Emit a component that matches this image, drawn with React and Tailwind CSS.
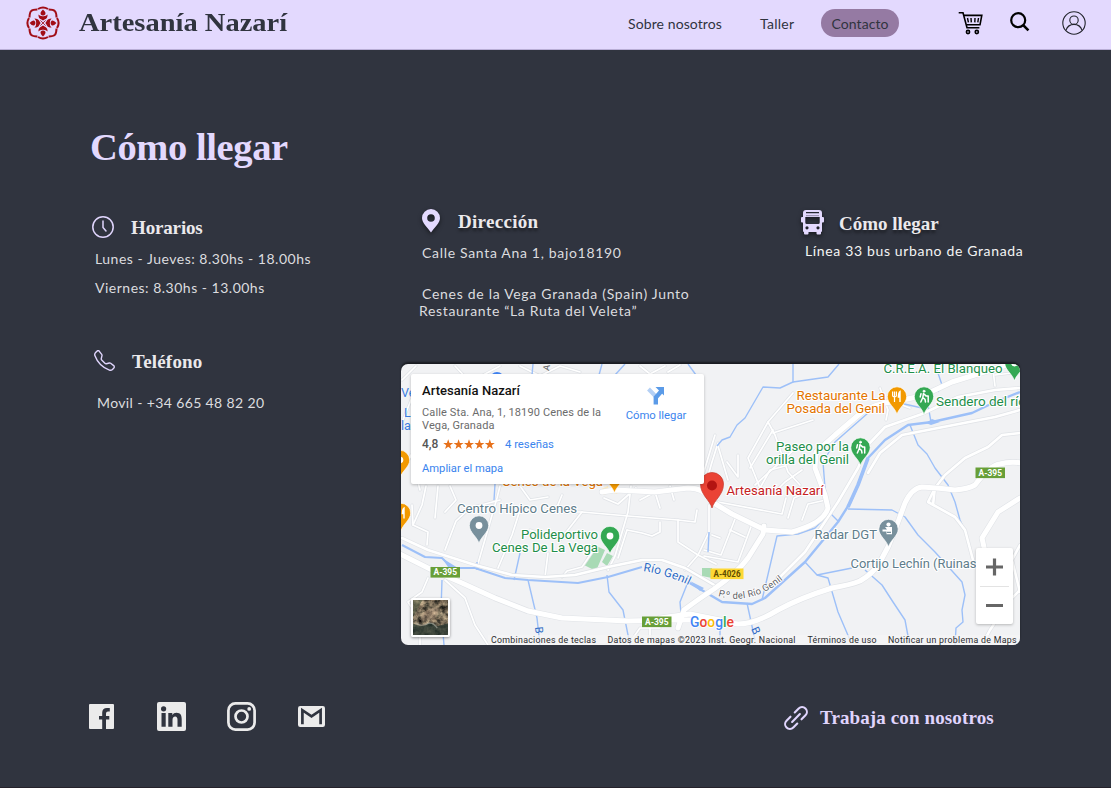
import React from "react";
import { BsTelephone } from "react-icons/bs";

const RIVER = "#9dc0f8";

const minorRoads = [
  "M412 505L413 525L428 532L427 545",
  "M413 525L422 505L426 486",
  "M438 486L435 518",
  "M477 567L497 498L500 486",
  "M445 550L456 521L470 508L500 500",
  "M498 568L512 535L520 510",
  "M545 577L548 553",
  "M562 577L567 571L582 567L595 548",
  "M562 495L555 512L582 512L628 516L678 520L695 522L697 510",
  "M582 512L560 540L530 530",
  "M631 486L628 512L615 556L608 570",
  "M678 520L678 542L698 555L716 564",
  "M698 555L685 570",
  "M627 530L642 533L652 536L660 532L660 522",
  "M627 530L618 558",
  "M709 505L709 532L698 555",
  "M712 535L720 538",
  "M735 519L721 555L704 550",
  "M752 524L738 562L704 556",
  "M730 530L745 537",
  "M428 578L422 592L408 602L416 614",
  "M420 636L420 645",
  "M445 580L465 598L475 625L488 645",
  "M628 645L640 628L660 628",
  "M650 628L650 645",
  "M793 393L768 422L748 458L760 488",
  "M773 433L813 420",
  "M768 422L775 435L788 472L800 485",
  "M773 430L750 468",
  "M738 455L738 477L727 462",
  "M718 443L712 462L708 476",
  "M718 446L728 480",
  "M755 485L788 455L796 448",
  "M775 492L785 482L802 470",
  "M760 488L770 470L785 466",
  "M715 435L702 478",
  "M718 502L782 514L786 498",
  "M788 518L794 498L808 492",
  "M802 520L808 504L826 500",
  "M880 388L888 410L886 420",
  "M888 400L910 408",
  "M995 386L993 370",
  "M995 375L1020 372",
  "M455 366L470 382L500 366",
  "M520 366L540 376L560 366L580 372",
  "M640 366L650 374L665 366",
  "M668 372L680 365",
  "M402 380L416 366",
  "M403 420L411 400",
  "M403 470L411 455L420 490",
  "M450 486L456 500L445 512",
  "M520 486L530 500L548 497",
  "M604 498L618 504L636 488",
  "M640 500L655 492L660 508",
  "M670 486L674 500",
];

const mediumRoads = [
  "M402 538L428 550L475 565L512 575L545 577L575 575L608 567L642 560L662 560L685 568L716 586",
  "M1020 388L995 390L958 397L922 414L885 427L868 445L858 468L838 502L805 552L772 585",
  "M1020 410L995 417L938 428L902 435L880 453L868 473",
  "M1020 433L1002 435L988 447L965 458L945 475L935 488L928 502L955 517L965 530L973 560",
  "M935 487L933 505",
  "M1020 590L1010 600L990 630L982 645",
  "M1020 545L1012 560L1020 592",
];

const majorRoads = [
  "M398 553L432 570L462 583L495 598L528 611L562 618L628 621L675 620L706 620L738 624Q755 624 778 610Q800 598 832 588Q850 585 860 581Q874 573 880 562L888 547L898 522L905 503Q912 488 922 487Q940 488 955 490Q968 489 975 485Q990 465 1000 464Q1010 461 1022 463",
  "M678 628L684 610Q700 598 714 589Q738 572 748 558L763 534L764 526",
  "M712 502L732 514L765 530L792 532Q806 528 815 523Q826 516 828 508L825 495L815 468L816 452L835 435L862 412Q878 403 892 402L922 396L952 382L1010 364",
  "M602 492L615 490L655 492L688 488Q704 488 711 500",
  "M660 618L690 614L720 620",
  "M1020 498L998 512L982 538L985 552",
];

const streams = [
  "M793 364V382L780 388L763 387L745 418L737 425L730 437L722 440L717 446",
  "M839 364L828 377L793 382",
  "M868 413L835 442L823 462L825 488L830 508L826 518",
  "M935 364L942 385L938 392",
  "M928 405L931 422",
  "M900 403L922 408",
  "M910 425L918 445L927 454L935 468L948 485L955 502L960 520L967 535",
  "M848 509L892 510L905 517L918 535L935 552L962 582L965 595L962 610L963 622L956 628L955 645",
  "M805 562L817 575L852 568",
  "M817 575L828 578L838 612L850 640",
  "M865 570L882 585L893 602L905 620L908 636",
  "M762 600L777 536L798 534L815 528L830 513L838 521",
  "M747 603L755 640",
  "M720 628V645",
  "M442 580L441 610L444 645",
  "M528 580L537 618L540 645",
  "M607 575L609 592L623 610L630 645",
  "M520 553L514 580",
  "M477 562V570",
  "M688 582L680 602L681 614",
  "M495 484L494 500",
  "M688 364L696 375",
  "M602 364L599 375",
  "M625 364L615 375",
  "M533 364L532 375",
  "M709 532L708 552",
];

function Roads({ paths, width, casing }) {
  return (
    <g fill="none" strokeLinejoin="round" strokeLinecap="round">
      <g stroke="#e0e3e7" strokeWidth={width + casing}>
        {paths.map((d) => <path key={d} d={d} />)}
      </g>
      <g stroke="#ffffff" strokeWidth={width}>
        {paths.map((d) => <path key={d} d={d} />)}
      </g>
    </g>
  );
}

function Marker({ x, y, color, children }) {
  return (
    <g transform={`translate(${x} ${y})`}>
      <path d="M0 0C-1.5-6.5-9.7-11-9.7-18A9.7 9.7 0 0 1 9.7-18C9.7-11 1.5-6.5 0 0Z" fill={color} stroke="#fff" strokeWidth=".7" />
      {children || <circle cy="-18" r="3.4" fill="#fff" />}
    </g>
  );
}

function Hiker() {
  return (
    <g fill="none" stroke="#fff" strokeWidth="1.5" strokeLinecap="round">
      <circle cx="0" cy="-23.3" r="1" fill="#fff" strokeWidth=".8" />
      <path d="M-.5-21L-1.2-17L1-15.2L1.5-12.5M-1.2-17L-3.2-12.5M0-20.5L2-18.6H3.6M-3-20.7L-3.8-17.6M4.2-18.5V-12.5" />
    </g>
  );
}

function Cutlery() {
  return (
    <g fill="none" stroke="#fff" strokeWidth="1.4">
      <path d="M-2.5-17.5V-12.5M-4.4-23V-19Q-4.4-17.6-2.5-17.6Q-.6-17.6-.6-19V-23M-2.5-23V-18" strokeWidth="1.2" />
      <path d="M3-12.5V-23Q1.4-22 1.4-17.5H3" fill="#fff" />
    </g>
  );
}

function Label({ x, y, w, color, size = 12.8, children }) {
  return (
    <text x={x} y={y} fill={color} fontSize={size} textLength={w} lengthAdjust="spacingAndGlyphs" stroke="#fff" strokeWidth="2.2" strokeLinejoin="round" style={{ paintOrder: "stroke" }}>
      {children}
    </text>
  );
}

function Shield({ x, y, w, fill, color, children }) {
  return (
    <g>
      <rect x={x} y={y} width={w} height="10.6" fill={fill} />
      <text x={x + w / 2} y={y + 8.3} fontSize="8.5" fontWeight="700" fill={color} textAnchor="middle" textLength={w - 6} lengthAdjust="spacingAndGlyphs">{children}</text>
    </g>
  );
}

function MapDrawing() {
  const green = "#1e8e4a";
  const slate = "#607d8b";
  return (
    <svg className="block h-full w-full font-['Roboto',sans-serif]" viewBox="401 364 619 281">
      <rect x="401" y="364" width="619" height="281" fill="#f1f2f4" />
      <path d="M592 544L605 550L596 571L584 565Z M607 553L613 556L607 566L602 562Z" fill="#a8dab5" />
      <path d="M702 568H712V578L702 576Z" fill="#a8dab5" />
      <path d="M601 489L608 486L609 493L603 495Z M616 488L620 489L617 494L614 493Z" fill="#fdecc0" />
      <Roads paths={minorRoads} width={1.7} casing={1.4} />
      <g fill="none" stroke={RIVER} strokeWidth="1.4" strokeLinejoin="round">
        {streams.map((d) => <path key={d} d={d} />)}
      </g>
      <g fill="none" stroke={RIVER} strokeLinejoin="round">
        <path d="M1020 392L995 402L972 413L932 422L908 425L885 440L868 458L858 485L850 503L838 522L805 562L765 598L752 604L722 602L705 592L688 582" strokeWidth="2.4" />
        <path d="M868 458L858 485L848 507" strokeWidth="3.6" />
        <path d="M642 567L608 577L578 583L528 580L505 578L475 568L452 568L442 558L425 557L402 545" strokeWidth="2" />
      </g>
      <path d="M926 423L932 419L940 422L931 425Z M442 558L458 568L450 570Z M690 581L704 588L700 591Z" fill={RIVER} />
      <Roads paths={mediumRoads} width={2.6} casing={1.3} />
      <Roads paths={majorRoads} width={5} casing={1.2} />

      <circle cx="497" cy="379" r="7" fill="#4285f4" />
      <g fontSize="12.5" fill="#3b7de0">
        <text x="401" y="397">Ve</text>
        <text x="404" y="417">L</text>
        <text x="401" y="430">la</text>
      </g>
      <text x="549" y="371" fontSize="9" fill="#555" transform="rotate(-80 549 371)">A</text>
      <Marker x={400} y={478} color="#f29900" />
      <Marker x={401} y={531} color="#f29900"><Cutlery /></Marker>
      <Marker x={614.5} y={493} color="#f29900" />
      <Label x={502} y={486} w={101} color="#e37400">Cenes de la Vega</Label>

      <Label x={457} y={512.5} w={120} color={slate}>Centro Hípico Cenes</Label>
      <Marker x={479} y={543.5} color="#78909c" />
      <Label x={521} y={539} w={77} color={green}>Polideportivo</Label>
      <Label x={492} y={552} w={106} color={green}>Cenes De La Vega</Label>
      <Marker x={610} y={554} color="#34a853" />

      <Label x={796.5} y={399.5} w={89} color="#e37400">Restaurante La</Label>
      <Label x={786.5} y={412.5} w={98.5} color="#e37400">Posada del Genil</Label>
      <Marker x={897} y={414.5} color="#f29900"><Cutlery /></Marker>
      <Marker x={924} y={414.5} color="#34a853"><Hiker /></Marker>
      <Label x={936} y={406} w={90} color={green}>Sendero del río</Label>
      <Label x={883.5} y={372.5} w={119} color={green}>C.R.E.A. El Blanqueo</Label>
      <Marker x={1014.5} y={381} color="#34a853" />
      <Label x={776} y={450.5} w={73} color={green}>Paseo por la</Label>
      <Label x={766} y={463.5} w={83} color={green}>orilla del Genil</Label>
      <Marker x={860.5} y={465.5} color="#34a853"><Hiker /></Marker>
      <Label x={814.5} y={538.5} w={62.5} color={slate}>Radar DGT</Label>
      <Marker x={888.5} y={547} color="#78909c">
        <g fill="#fff">
          <circle cx="0" cy="-22.4" r="2.1" />
          <path d="M-3.5-20H3.5V-12.8H-2V-15.5H-6V-17.4H-1.5Z" />
          <path d="M-1.5-15.3H2.5V-14H-1.5Z" fill="#78909c" />
        </g>
      </Marker>
      <Label x={850.5} y={568} w={126} color={slate}>Cortijo Lechín (Ruinas</Label>

      <path d="M712 508C710 500 700.5 495 700.5 484A11.5 11.5 0 0 1 723.5 484C723.5 495 714 500 712 508Z" fill="#ea4335" stroke="#c5392d" strokeWidth=".7" />
      <circle cx="712" cy="485.5" r="5" fill="#b31412" />
      <Label x={726.5} y={494.5} w={97} color="#c5221f">Artesanía Nazarí</Label>

      <Shield x={430.5} y={567} w={29.5} fill="#689f38" color="#fff">A-395</Shield>
      <Shield x={642} y={616.5} w={29.5} fill="#689f38" color="#fff">A-395</Shield>
      <Shield x={975.5} y={467.5} w={29.5} fill="#689f38" color="#fff">A-395</Shield>
      <Shield x={710.5} y={568.5} w={33} fill="#fdd835" color="#5f4c00">A-4026</Shield>

      <defs>
        <path id="rio" d="M643 571Q668 575 690 586" />
        <path id="paseo" d="M718 596Q752 606 784 579" />
      </defs>
      <text fontSize="12" fill="#2f6bc4" stroke="#fff" strokeWidth="1.2" style={{ paintOrder: "stroke" }}>
        <textPath href="#rio" textLength="48">Río Genil</textPath>
      </text>
      <text fontSize="9.5" fill="#5f6368" stroke="#fff" strokeWidth="1.5" style={{ paintOrder: "stroke" }}>
        <textPath href="#paseo" textLength="70">P.º del Río Genil</textPath>
      </text>
      <text x="535" y="627" fontSize="11" fill="#2f6bc4" transform="rotate(85 535 627)">B</text>
      <text x="751" y="629" fontSize="11" fill="#2f6bc4" transform="rotate(65 751 629)">B</text>

      <text x="690" y="626.5" fontSize="14.5" fontWeight="500" textLength="44" lengthAdjust="spacingAndGlyphs" stroke="#fff" strokeWidth="1.6" style={{ paintOrder: "stroke" }}>
        <tspan fill="#4285f4">G</tspan><tspan fill="#ea4335">o</tspan><tspan fill="#fbbc04">o</tspan><tspan fill="#4285f4">g</tspan><tspan fill="#34a853">l</tspan><tspan fill="#ea4335">e</tspan>
      </text>

      <rect x="488" y="635" width="532" height="10" fill="#f5f5f5" opacity=".7" />
      <g fontSize="8.8" fill="#2b2c2f">
        <text x="491" y="643" textLength="105">Combinaciones de teclas</text>
        <text x="607.5" y="643" textLength="188">Datos de mapas ©2023 Inst. Geogr. Nacional</text>
        <text x="807.5" y="643" textLength="69">Términos de uso</text>
        <text x="888" y="643" textLength="128.5">Notificar un problema de Maps</text>
      </g>
    </svg>
  );
}

function Satellite() {
  return (
    <svg className="block h-full w-full" viewBox="0 0 36 36">
      <filter id="grain" x="0" y="0" width="100%" height="100%" colorInterpolationFilters="sRGB">
        <feTurbulence type="fractalNoise" baseFrequency=".17" numOctaves="4" seed="8" />
        <feColorMatrix values="1.2 0 0 0 -.12  1.05 .05 0 0 -.12  .85 .05 0 0 -.1  0 0 0 0 1" />
      </filter>
      <rect width="36" height="36" filter="url(#grain)" />
      <path d="M0 24Q8 29 14 25Q18 21 25 27L36 24V36H0Z" fill="#26362f" opacity=".75" />
      <path d="M3 24Q10 28 16 24Q21 23 25 29" fill="none" stroke="#b8b9ae" strokeWidth="1.2" opacity=".6" />
      <path d="M0 0H10L3 12L0 17Z" fill="#3f4d38" opacity=".5" />
      <path d="M8 16Q18 6 27 9L22 20Q14 19 8 22Z" fill="#b69a83" opacity=".35" />
    </svg>
  );
}

function LogoMark() {
  const turns = [0, 90, 180, 270];
  return (
    <svg className="h-[34px] w-[34px]" viewBox="-17 -17 34 34" fill="none">
      {turns.map((a) => (
        <g key={a} transform={`rotate(${a})`}>
          <path d="M-5-14Q0-17.2 5-14" stroke="#a10d16" strokeWidth="2" />
          <path d="M5.6-13.5Q10.4-13.4 11.9-11.9Q13.4-10.4 13.5-5.6" stroke="#a10d16" strokeWidth="2" />
          <path d="M0-13.4Q3.4-10.4 2.2-8.6Q1.3-7.6 0-7.6Q-1.3-7.6-2.2-8.6Q-3.4-10.4 0-13.4Z" fill="#a10d16" />
          <path d="M-4.6-8.6Q-3-6.6 0-6.8Q3-6.6 4.6-8.6Q4.6-4.6 2-3.7L0-2.4L-2-3.7Q-4.6-4.6-4.6-8.6Z" fill="#a10d16" />
          <path d="M0 0L2.6-2.6" stroke="#a10d16" strokeWidth=".8" />
        </g>
      ))}
    </svg>
  );
}

function Bus() {
  return (
    <svg className="mt-px h-[25px] w-[23px] overflow-visible drop-shadow-[0_2px_2px_rgba(0,0,0,0.5)]" viewBox="0 0 23 25">
      <path fillRule="evenodd" fill="#e3d9fe" d="M5 0H18Q21 0 21 3V7H22Q23 7 23 8V11.5Q23 12.5 22 12.5H21V21Q21 21.8 20 22V23.5Q20 24.5 19 24.5H16.5Q15.5 24.5 15.5 23.5V22H7.5V23.5Q7.5 24.5 6.5 24.5H4Q3 24.5 3 23.5V22Q2 21.8 2 21V12.5H1Q0 12.5 0 11.5V8Q0 7 1 7H2V3Q2 0 5 0ZM5 2V3.2H18V2ZM4.3 7V12.5Q4.3 14 5.8 14H17.2Q18.7 14 18.7 12.5V7ZM6 16.2A1.6 1.6 0 1 0 6 19.4A1.6 1.6 0 1 0 6 16.2ZM17 16.2A1.6 1.6 0 1 0 17 19.4A1.6 1.6 0 1 0 17 16.2Z" />
      <path d="M5 5.7H18" stroke="#8f88a6" strokeWidth="1" />
    </svg>
  );
}

function Cart() {
  return (
    <svg className="h-[24px] w-[26px]" viewBox="0 0 26 24" fill="none" stroke="#000" strokeWidth="1.6">
      <path d="M.7 1.8H5L9 16.8H21.4" />
      <path d="M6 4.4H23.8L22 13.8H8.4" />
      <path d="M9.5 7L10.4 11.4M13 7L13.3 11.4M17 7L16.8 11.4M20.5 7L19.8 11.4" strokeWidth="1.4" />
      <circle cx="10" cy="21" r="1.6" />
      <circle cx="18.8" cy="21" r="1.6" />
    </svg>
  );
}

function Header() {
  return (
    <header className="flex h-[50px] items-start border-b border-[#b9aed6] bg-[#e3d9fe] pl-[26px] text-[#30343f]">
      <div className="mt-[6px] h-[34px] w-[34px]"><LogoMark /></div>
      <div className="mt-[7px] ml-[19px] w-[548px] font-['Liberation_Serif',serif] text-[25px] leading-[32px] font-bold whitespace-nowrap">
        <span className="inline-block origin-left scale-x-[1.14]">Artesanía Nazarí</span>
      </div>
      <nav className="mt-[9px] flex font-['Lato',sans-serif] text-[14px] leading-[30px] whitespace-nowrap">
        <a className="block w-[132px] pl-px tracking-[0.1px]">Sobre nosotros</a>
        <a className="block w-[62px] pl-px tracking-[0.25px]">Taller</a>
        <a className="block h-[28px] w-[78px] rounded-full bg-[#957aa3] text-center tracking-[0.05px]">Contacto</a>
      </nav>
      <div className="mt-[11px] ml-[59px]"><Cart /></div>
      <svg className="mt-[12px] ml-[26px] h-[20px] w-[20px]" viewBox="0 0 20 20" fill="none" stroke="#000">
        <circle cx="8.2" cy="8.2" r="7" strokeWidth="2.2" />
        <path d="M13.2 13.2L18.4 18.4" strokeWidth="2.6" />
      </svg>
      <svg className="mt-[11px] ml-[32px] h-[24px] w-[24px]" viewBox="0 0 24 24" fill="none" stroke="#22242c" strokeWidth="1.1">
        <circle cx="12" cy="12" r="11.2" />
        <circle cx="12" cy="9.2" r="4.2" />
        <path d="M3.9 19.4Q6 13.4 12 13.4Q18 13.4 20.1 19.4" />
      </svg>
    </header>
  );
}

function InfoCard() {
  return (
    <div className="absolute top-[10px] left-[10px] flex h-[110px] w-[293px] justify-between rounded-[2px] bg-white pt-[8px] pr-[10px] pl-[11px] font-['Roboto',sans-serif] whitespace-nowrap shadow-[0_1px_3px_rgba(0,0,0,0.25)]">
      <div className="w-[190px]">
        <div className="text-[13px] leading-[18px] font-medium tracking-[0.05px] text-[#111]">Artesanía Nazarí</div>
        <div className="mt-[6px] text-[11px] leading-[13px] tracking-[0.13px] text-[#6b6b6b]">Calle Sta. Ana, 1, 18190 Cenes de la<br />Vega, Granada</div>
        <div className="mt-[4px] flex h-[16px] items-center">
          <span className="w-[21px] text-[12px] font-medium text-[#555]">4,8</span>
          <svg className="h-[11px] w-[52px]" viewBox="0 0 52 11" fill="#e7711b">
            {[0, 1, 2, 3, 4].map((n) => (
              <path key={n} transform={`translate(${n * 10.4} 0)`} d="M5.2.3L6.5 4H10.2L7.2 6.3L8.3 10L5.2 7.8L2.1 10L3.2 6.3L.2 4H3.9Z" />
            ))}
          </svg>
          <span className="mt-[2px] ml-[10px] text-[11.3px] text-[#3a84ee]">4 reseñas</span>
        </div>
        <div className="mt-[9px] text-[11.2px] leading-[16px] text-[#3a84ee]">Ampliar el mapa</div>
      </div>
      <div className="flex w-[76px] flex-col items-center pt-[4px]">
        <svg className="h-[19px] w-[18px]" viewBox="0 0 18 19" fill="none">
          <path d="M1.5 3L8.8 10.5" stroke="#b4d0f5" strokeWidth="4" />
          <path d="M8.8 18.5V11.5L14.5 5" stroke="#5b9be8" strokeWidth="4.4" />
          <path d="M8.5 1H17V9.5Z" fill="#5b9be8" />
        </svg>
        <div className="mt-[3px] text-[11.3px] leading-[16px] text-[#3a84ee]">Cómo llegar</div>
      </div>
    </div>
  );
}

function MapPanel() {
  return (
    <div className="relative h-[281px] w-[619px] overflow-hidden rounded-[7px] shadow-[0_-2px_2px_rgba(0,0,0,0.5)]">
      <MapDrawing />
      <InfoCard />
      <div className="absolute top-[234px] left-[10px] h-[39px] w-[39px] rounded-[2px] border-2 border-white shadow-[0_1px_3px_rgba(0,0,0,0.4)]"><Satellite /></div>
      <div className="absolute top-[184px] left-[575px] h-[76px] w-[37px] rounded-[2px] bg-white shadow-[0_1px_3px_rgba(0,0,0,0.25)]">
        <svg className="block" width="37" height="76" viewBox="0 0 37 76">
          <path d="M18.5 10.5V27.5M10 19H27M10 57.5H27" stroke="#666" strokeWidth="3.2" />
          <path d="M4 38.5H33" stroke="#e3e3e3" />
        </svg>
      </div>
    </div>
  );
}

function LeftColumn() {
  return (
    <aside className="w-[309px] shrink-0 pt-[16px] whitespace-nowrap">
      <div className="flex h-[22px]">
        <svg className="h-[22px] w-[22px]" viewBox="0 0 22 22" fill="none" stroke="#e0d5fd" strokeWidth="1.5" strokeLinecap="round">
          <circle cx="11" cy="11" r="10.2" />
          <path d="M11 5V11.5L14 15" />
        </svg>
        <h2 className="ml-[17px] font-['Liberation_Serif',serif] text-[19px] leading-[24px] font-bold tracking-[-0.15px] text-[#ebe9ec]">Horarios</h2>
      </div>
      <p className="mt-[9px] ml-[3px] text-[14px] leading-[24px] tracking-[0.51px]">Lunes - Jueves: 8.30hs - 18.00hs</p>
      <p className="mt-[5px] ml-[3px] text-[14px] leading-[24px] tracking-[0.5px]">Viernes: 8.30hs - 13.00hs</p>
      <div className="mt-[50px] ml-[2px] flex h-[22px]">
        <BsTelephone className="h-[21px] w-[21px] text-[#e0d5fd]" />
        <h2 className="ml-[17px] font-['Liberation_Serif',serif] text-[19px] leading-[24px] font-bold tracking-[0.2px] text-[#ebe9ec]">Teléfono</h2>
      </div>
      <p className="mt-[19px] ml-[5px] text-[14px] leading-[24px] tracking-[0.37px]">Movil - +34 665 48 82 20</p>
    </aside>
  );
}

function Directions() {
  return (
    <div className="flex h-[164px] whitespace-nowrap">
      <div className="w-[399px] pt-[9px] pl-[18px]">
        <div className="ml-[3px] flex h-[24px]">
          <svg className="h-[24px] w-[18px] overflow-visible drop-shadow-[0_2px_2px_rgba(0,0,0,0.5)]" viewBox="0 0 18 24">
            <path d="M9 0A9 9 0 0 0 0 9C0 14 5 18 9 23.5C13 18 18 14 18 9A9 9 0 0 0 9 0ZM9 5.2A3.8 3.8 0 1 1 9 12.8A3.8 3.8 0 1 1 9 5.2Z" fill="#e3d9fe" fillRule="evenodd" />
          </svg>
          <h2 className="ml-[18px] font-['Liberation_Serif',serif] text-[19px] leading-[26px] font-bold tracking-[0.3px] text-[#ebe9ec] [text-shadow:0_3px_3px_rgba(0,0,0,0.4)]">Dirección</h2>
        </div>
        <p className="mt-[8px] ml-[3px] text-[14px] leading-[24px] tracking-[0.68px]">Calle Santa Ana 1, bajo18190</p>
        <p className="mt-[20px] ml-[3px] text-[14px] leading-[17px] tracking-[0.71px]">Cenes de la Vega Granada (Spain) Junto</p>
        <p className="text-[14px] leading-[17px] tracking-[0.67px]">Restaurante “La Ruta del Veleta”</p>
      </div>
      <div className="pt-[9px] pl-px">
        <div className="flex h-[27px]">
          <Bus />
          <h2 className="mt-px ml-[15px] font-['Liberation_Serif',serif] text-[19px] leading-[28px] font-bold text-[#ebe9ec] [text-shadow:0_3px_3px_rgba(0,0,0,0.4)]">Cómo llegar</h2>
        </div>
        <p className="mt-[2px] ml-[4px] text-[14px] leading-[26px] tracking-[0.65px] text-[#f4f4f4]">Línea 33 bus urbano de Granada</p>
      </div>
    </div>
  );
}

function Footer() {
  return (
    <footer className="mt-[55px] flex h-[32px] items-center pl-[89px] text-[#ebebeb]">
      <svg className="h-[25px] w-[25px]" viewBox="0 0 25 25" fill="currentColor">
        <path d="M1 0H24Q25 0 25 1V24Q25 25 24 25H17V15.5H20.3V12H17V9.4Q17 7.4 19 7.4H20.8V4H18Q13.2 4 13.2 8.8V12H10V15.5H13.2V25H1Q0 25 0 24V1Q0 0 1 0Z" />
      </svg>
      <svg className="ml-[43px] h-[29px] w-[29px]" viewBox="0 0 29 29">
        <rect width="29" height="29" rx="2" fill="currentColor" />
        <g fill="#30343f">
          <circle cx="6.6" cy="6.8" r="2.6" />
          <path d="M4.5 11H8.7V24.7H4.5ZM11.3 11H15.3V12.9Q16.6 10.7 19.4 10.7C23.7 10.7 24.7 13.5 24.7 17.2V24.7H20.5V18Q20.5 14.4 18.2 14.4Q15.5 14.4 15.5 18V24.7H11.3Z" />
        </g>
      </svg>
      <svg className="ml-[41px] h-[29px] w-[29px]" viewBox="0 0 29 29" fill="none" stroke="currentColor">
        <rect x="1.4" y="1.4" width="26.2" height="26.2" rx="7" strokeWidth="2.7" />
        <circle cx="14.5" cy="14.5" r="6" strokeWidth="2.7" />
        <circle cx="22.2" cy="6.9" r="1.9" fill="currentColor" stroke="none" />
      </svg>
      <svg className="ml-[42px] h-[21px] w-[27px]" viewBox="0 0 27 21">
        <rect width="27" height="21" rx="2.2" fill="currentColor" />
        <path d="M4.4 18.3V4.2L13.5 10.4L22.6 4.2V18.3" fill="none" stroke="#30343f" strokeWidth="2.7" />
      </svg>
      <a className="ml-[459px] flex items-center whitespace-nowrap text-[#e0d5fd]">
        <svg className="mt-[4px] h-[24px] w-[24px]" viewBox="-12 -12 24 24" fill="none" stroke="currentColor" strokeWidth="2.1" strokeLinecap="round">
          <g transform="rotate(-45)">
            <path d="M-3-4.8H-8.6A4.8 4.8 0 0 0-8.6 4.8H-3M3-4.8H8.6A4.8 4.8 0 0 1 8.6 4.8H3M-5.5 0H5.5" />
          </g>
        </svg>
        <span className="mt-[4px] ml-[12px] font-['Liberation_Serif',serif] text-[19px] leading-[24px] font-bold tracking-[0.12px]">Trabaja con nosotros</span>
      </a>
    </footer>
  );
}

export default function App() {
  return (
    <div className="flex h-[788px] w-[1111px] flex-col overflow-hidden border-b border-[#25222b] bg-[#30343f]">
      <Header />
      <main className="font-['Lato',sans-serif] text-[#dcdcdf]">
        <h1 className="h-[150px] pt-[72px] pl-[90px] font-['Liberation_Serif',serif] text-[38.5px] leading-[50px] font-bold tracking-[-0.4px] text-[#e3d9fe]">Cómo llegar</h1>
        <div className="flex pl-[92px]">
          <LeftColumn />
          <section className="w-[640px]">
            <Directions />
            <MapPanel />
          </section>
        </div>
        <Footer />
      </main>
    </div>
  );
}
